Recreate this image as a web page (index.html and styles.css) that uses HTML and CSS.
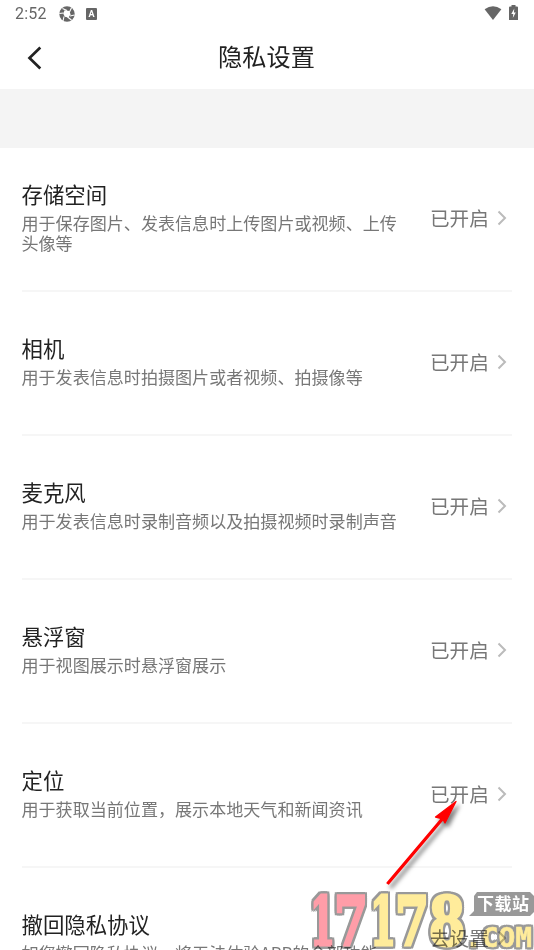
FILE: index.html
```html
<!DOCTYPE html>
<html lang="zh-CN">
<head>
<meta charset="utf-8">
<title>隐私设置</title>
<link rel="stylesheet" href="styles.css">
</head>
<body>
<div class="screen">
  <div class="statusbar">
    <span class="time">2:52</span>
    <svg class="aperture" width="16" height="16" viewBox="0 0 16 16"><circle cx="8" cy="8" r="7.7" fill="#666"/><path d="M5.500 4.200 10.500 5 11.500 8.500 9.500 11.500 5.800 10.800 4.300 7.800z" fill="#fff"/><path d="M8 4.500 3.500 2.500M10.500 6 12.500 1.800M11 10 15.500 9M8.500 11 12.500 14M5 10.500 4 15M4.500 7 .3 7.500" stroke="#fff" stroke-width="1.100"/></svg>
    <span class="a-badge">A</span>
    <svg class="wifi" width="18" height="15" viewBox="0 0 18 15"><path d="M.6 3.2Q9-2.6 17.4 3.2L9 14z" fill="#666"/></svg>
    <svg class="battery" width="9" height="16" viewBox="0 0 9 16"><path d="M2.500 0h4v1.500H8q1 0 1 1V15H0V2.500q0-1 1-1h1.500z" fill="#666"/><path d="M5.300 3.500 2.300 9h2L3.800 13l3-5.500H4.900z" fill="#fff"/></svg>
  </div>
  <header class="header">
    <svg class="back" width="16" height="26" viewBox="0 0 16 26"><path d="M13.300 2.500 2.500 13 13.300 23.500" fill="none" stroke="#222" stroke-width="2.700"/></svg>
    <h1>隐私设置</h1>
  </header>
  <div class="band"></div>
  <main class="list">
    <section class="row"><div class="info"><h2>存储空间</h2><p>用于保存图片、发表信息时上传图片或视频、上传头像等</p></div><span class="state">已开启</span><svg class="chev" viewBox="0 0 10 16"><path d="M1.500 1.500 8 8l-6.500 6.500"/></svg></section>
    <section class="row"><div class="info"><h2>相机</h2><p>用于发表信息时拍摄图片或者视频、拍摄像等</p></div><span class="state">已开启</span><svg class="chev" viewBox="0 0 10 16"><path d="M1.500 1.500 8 8l-6.500 6.500"/></svg></section>
    <section class="row"><div class="info"><h2>麦克风</h2><p>用于发表信息时录制音频以及拍摄视频时录制声音</p></div><span class="state">已开启</span><svg class="chev" viewBox="0 0 10 16"><path d="M1.500 1.500 8 8l-6.500 6.500"/></svg></section>
    <section class="row"><div class="info"><h2>悬浮窗</h2><p>用于视图展示时悬浮窗展示</p></div><span class="state">已开启</span><svg class="chev" viewBox="0 0 10 16"><path d="M1.500 1.500 8 8l-6.500 6.500"/></svg></section>
    <section class="row"><div class="info"><h2>定位</h2><p>用于获取当前位置，展示本地天气和新闻资讯</p></div><span class="state">已开启</span><svg class="chev" viewBox="0 0 10 16"><path d="M1.500 1.500 8 8l-6.500 6.500"/></svg></section>
    <section class="row"><div class="info"><h2>撤回隐私协议</h2><p>如您撤回隐私协议，将无法体验APP的全部功能</p></div><span class="state">去设置</span><svg class="chev" viewBox="0 0 10 16"><path d="M1.500 1.500 8 8l-6.500 6.500"/></svg></section>
  </main>
  <svg class="watermark" width="228" height="66" viewBox="306 884 228 66">
    <g class="digits" font-size="68">
      <text class="pink" x="310" y="945" textLength="25" lengthAdjust="spacingAndGlyphs">1</text>
      <text class="pink" x="334" y="945" textLength="34" lengthAdjust="spacingAndGlyphs">7</text>
      <text x="370" y="945" textLength="26" lengthAdjust="spacingAndGlyphs">1</text>
      <text x="395" y="945" textLength="34" lengthAdjust="spacingAndGlyphs">7</text>
      <text x="429" y="945" textLength="36" lengthAdjust="spacingAndGlyphs">8</text>
      <text class="com" x="465" y="947" font-size="26" textLength="67" lengthAdjust="spacingAndGlyphs">.COM</text>
    </g>
    <path d="M477 892h53l4 4v16l-4 4h-61l5-5v-15z" fill="#999"/>
    <text class="site" x="477" y="910" textLength="52">下载站</text>
  </svg>
  <svg class="arrow" width="90" height="100" viewBox="380 792 90 100"><path d="M387 883 441.500 818.500 435.500 817 456 801.500 445 823 443 819.500 388.500 884z" fill="#f00" stroke="#f00" stroke-width="1.300" stroke-linejoin="round"/></svg>
</div>
</body>
</html>
```
FILE: styles.css
```css
* { box-sizing: border-box; }
body { margin: 0; background: #fff; font-family: "Noto Sans CJK SC", sans-serif; }
.screen { position: relative; height: 950px; overflow: hidden; background: #fff; }
.statusbar { display: flex; align-items: center; height: 28px; padding: 0 16px 0 15px; color: #666; }
.time { width: 44px; font: 16px/28px Roboto, sans-serif; letter-spacing: .2px; }
.aperture { margin-top: -1px; }
.a-badge { width: 11px; height: 12px; margin-left: 11px; border-radius: 1px; background: #666; color: #fff; font: bold 9px/12px Roboto, sans-serif; text-align: center; }
.wifi { margin-left: auto; margin-top: -1px; }
.battery { margin-left: 7px; margin-top: -3px; }
.header { display: grid; grid-template-columns: 50px 1fr 51px; align-items: center; height: 61px; padding-bottom: 2px; color: #222; }
.back { margin-left: 27px; }
h1 { margin: -3px 0 0; font-size: 24.2px; line-height: 36px; font-weight: 400; text-align: center; }
.band { height: 59px; background: #f4f4f4; }
.list { padding: 0 22px 0 21.5px; }
.row { display: flex; align-items: center; height: 144px; border-bottom: 2px solid #f6f6f6; }
.info { width: 378px; }
h2 { margin: -1px 0 10px; font-size: 21.4px; line-height: 18px; font-weight: 400; color: #222; }
p { margin: 0; font-size: 17.07px; line-height: 20px; color: #777; }
.state { width: 67px; margin: -3px 0 0 auto; font-size: 19.6px; line-height: 28px; color: #777; white-space: nowrap; }
.chev { width: 10px; height: 16px; margin: -2px 5px 0 0; fill: none; stroke: #bbb; stroke-width: 2; }
.watermark { position: absolute; left: 306px; top: 884px; mix-blend-mode: multiply; }
.digits { font-family: "DejaVu Serif", serif; font-weight: 700; fill: #ffec9b; stroke: #ffec9b; stroke-width: 3px; }
.digits text { filter: drop-shadow(2px 0 0 #999) drop-shadow(-2px 0 0 #999) drop-shadow(0 2px 0 #999) drop-shadow(0 -2px 0 #999); }
.digits .pink { fill: #ff9da8; stroke: #ff9da8; }
.digits .com { font-family: "DejaVu Sans Mono", monospace; stroke-width: .5px; }
.site { font-size: 17px; font-weight: 700; fill: #fff; }
.arrow { position: absolute; left: 380px; top: 792px; filter: drop-shadow(3px 4px 2px rgba(0,0,0,.5)); }
```
